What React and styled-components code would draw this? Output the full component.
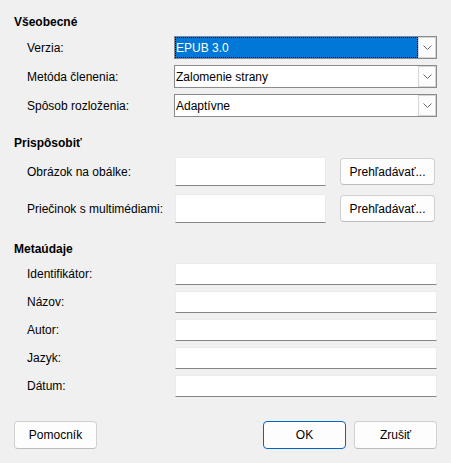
import React from "react";
import styled, { createGlobalStyle } from "styled-components";

const GlobalStyle = createGlobalStyle`
  html, body {
    margin: 0;
    padding: 0;
    background: #f0f0f0;
  }
  body {
    font-family: "Liberation Sans", Arial, sans-serif;
    font-size: 12px;
    color: #000;
  }
`;

const Dialog = styled.div`
  width: 451px;
  height: 463px;
  box-sizing: border-box;
  padding: 14px 14px 0 14px;
  display: flex;
  flex-direction: column;
`;

const Section = styled.section`
  display: flex;
  flex-direction: column;
  margin-bottom: 18px;
`;

const Heading = styled.div`
  font-weight: bold;
  line-height: 16px;
  height: 16px;
  margin-bottom: 6px;
`;

const Rows = styled.div`
  display: flex;
  flex-direction: column;
  gap: ${(p) => p.$gap}px;
`;

const Row = styled.div`
  display: grid;
  grid-template-columns: 160px 1fr;
  align-items: center;
  height: ${(p) => p.$height}px;
`;

const Label = styled.span`
  padding-left: 13px;
  line-height: 14px;
  white-space: nowrap;
`;

const Combo = styled.div`
  height: 23px;
  box-sizing: border-box;
  border: 1px solid #8a8a8a;
  background: #fff;
  display: flex;
  align-items: stretch;
`;

const ComboValue = styled.div`
  flex: 1;
  display: flex;
  align-items: center;
  padding-left: 1px;
  box-sizing: border-box;
  background: ${(p) => (p.$selected ? "#0078d7" : "#fff")};
  color: ${(p) => (p.$selected ? "#fff" : "#000")};
  outline: ${(p) => (p.$selected ? "1px dotted #000" : "none")};
  outline-offset: -1px;
`;

const ComboButton = styled.div`
  width: 18px;
  box-sizing: border-box;
  border: 1px solid #d6d6d6;
  background: #fcfcfc;
  display: flex;
  align-items: center;
  justify-content: center;
`;

const TextField = styled.div`
  box-sizing: border-box;
  height: ${(p) => p.$height}px;
  width: ${(p) => (p.$width ? `${p.$width}px` : "auto")};
  margin-left: 1px;
  background: #fff;
  border: 1px solid #ebebeb;
  border-bottom: 1px solid #858585;
`;

const FieldWithButton = styled.div`
  display: flex;
  align-items: center;
  gap: 14px;
`;

const Button = styled.button`
  font-family: inherit;
  font-size: 12px;
  color: #000;
  height: ${(p) => p.$height || 28}px;
  width: ${(p) => p.$width}px;
  box-sizing: border-box;
  background: #fdfdfd;
  border: 1px solid ${(p) => (p.$primary ? "#0067c0" : "#d0d0d0")};
  border-bottom-color: ${(p) => (p.$primary ? "#0067c0" : "#bdbdbd")};
  border-radius: 4px;
  padding: 0;
  cursor: default;
`;

const Footer = styled.div`
  margin-top: 6px;
  display: flex;
  align-items: center;
  gap: 8px;
`;

const Spacer = styled.div`
  flex: 1;
`;

const Chevron = () => (
  <svg width="9" height="5" viewBox="0 0 9 5">
    <path d="M0.5 0.5 L4.5 4.5 L8.5 0.5" fill="none" stroke="#6a6a6a" strokeWidth="1" />
  </svg>
);

const ComboBox = ({ value, selected }) => (
  <Combo>
    <ComboValue $selected={selected}>{value}</ComboValue>
    <ComboButton>
      <Chevron />
    </ComboButton>
  </Combo>
);

const metaFields = ["Identifikátor:", "Názov:", "Autor:", "Jazyk:", "Dátum:"];

export default function App() {
  return (
    <>
      <GlobalStyle />
      <Dialog>
        <Section>
          <Heading>Všeobecné</Heading>
          <Rows $gap={6}>
            <Row $height={23}>
              <Label>Verzia:</Label>
              <ComboBox value="EPUB 3.0" selected />
            </Row>
            <Row $height={23}>
              <Label>Metóda členenia:</Label>
              <ComboBox value="Zalomenie strany" />
            </Row>
            <Row $height={23}>
              <Label>Spôsob rozloženia:</Label>
              <ComboBox value="Adaptívne" />
            </Row>
          </Rows>
        </Section>

        <Section>
          <Heading>Prispôsobiť</Heading>
          <Rows $gap={8}>
            <Row $height={29}>
              <Label>Obrázok na obálke:</Label>
              <FieldWithButton>
                <TextField $height={29} $width={151} />
                <Button $height={27} $width={95}>Prehľadávať...</Button>
              </FieldWithButton>
            </Row>
            <Row $height={29}>
              <Label>Priečinok s multimédiami:</Label>
              <FieldWithButton>
                <TextField $height={29} $width={151} />
                <Button $height={27} $width={95}>Prehľadávať...</Button>
              </FieldWithButton>
            </Row>
          </Rows>
        </Section>

        <Section>
          <Heading>Metaúdaje</Heading>
          <Rows $gap={6}>
            {metaFields.map((f) => (
              <Row key={f} $height={22}>
                <Label>{f}</Label>
                <TextField $height={22} />
              </Row>
            ))}
          </Rows>
        </Section>

        <Footer>
          <Button $width={83}>Pomocník</Button>
          <Spacer />
          <Button $width={83} $primary>OK</Button>
          <Button $width={83}>Zrušiť</Button>
        </Footer>
      </Dialog>
    </>
  );
}
